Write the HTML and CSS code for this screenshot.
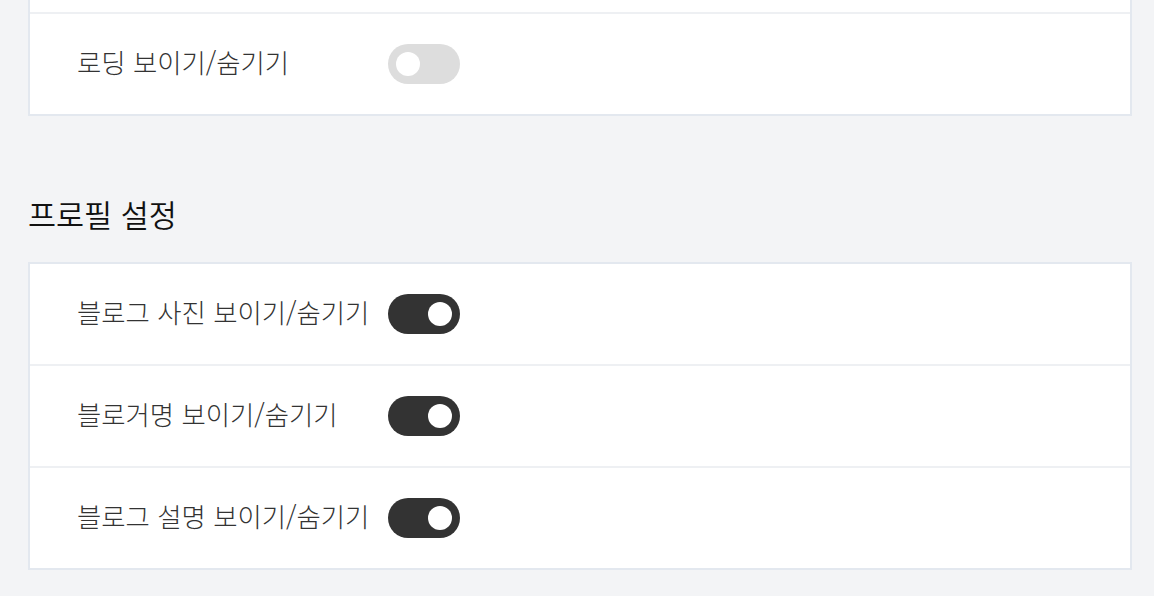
FILE: index.html
```html
<!DOCTYPE html>
<html lang="ko">
<head>
<meta charset="utf-8">
<link rel="stylesheet" href="styles.css">
<title>설정</title>
</head>
<body>
<div class="page">
  <section class="section section-first">
    <div class="card">
      <div class="row row-hidden"></div>
      <div class="row">
        <span class="label">로딩 보이기/숨기기</span>
        <span class="toggle"><span class="knob"></span></span>
      </div>
    </div>
  </section>
  <section class="section">
    <h2 class="title">프로필 설정</h2>
    <div class="card">
      <div class="row">
        <span class="label">블로그 사진 보이기/숨기기</span>
        <span class="toggle on"><span class="knob"></span></span>
      </div>
      <div class="row">
        <span class="label">블로거명 보이기/숨기기</span>
        <span class="toggle on"><span class="knob"></span></span>
      </div>
      <div class="row">
        <span class="label">블로그 설명 보이기/숨기기</span>
        <span class="toggle on"><span class="knob"></span></span>
      </div>
    </div>
  </section>
</div>
</body>
</html>
```
FILE: styles.css
```css
html, body {
  margin: 0;
  padding: 0;
  background: #f3f4f6;
}
body {
  font-family: "Noto Sans CJK KR", "Noto Sans", sans-serif;
  color: #333;
  overflow: hidden;
}
.page {
  padding: 0 22px 0 28px;
  margin-top: -90px;
}
.section {
  display: flex;
  flex-direction: column;
}
.section-first {
  margin-bottom: 84px;
}
.title {
  margin: 0 0 34px;
  font-size: 30.5px;
  font-weight: 350;
  line-height: 28px;
  color: #111;
  letter-spacing: 0;
}
.card {
  background: #fff;
  border: 2px solid #e3e8ef;
  display: flex;
  flex-direction: column;
}
.row {
  height: 100px;
  display: flex;
  align-items: center;
  padding-left: 47px;
  border-top: 2px solid #eef0f3;
}
.row:first-child {
  border-top: none;
}
.label {
  flex: 0 0 311px;
  font-size: 26.4px;
  font-weight: 300;
  line-height: 1;
  color: #333;
  margin-top: -4px;
}
.toggle {
  width: 72px;
  height: 40px;
  border-radius: 20px;
  background: #dddddd;
  display: flex;
  align-items: center;
  padding: 0 8px;
  box-sizing: border-box;
}
.toggle .knob {
  width: 24px;
  height: 24px;
  border-radius: 50%;
  background: #fff;
}
.toggle.on {
  background: #333;
  justify-content: flex-end;
}
```
